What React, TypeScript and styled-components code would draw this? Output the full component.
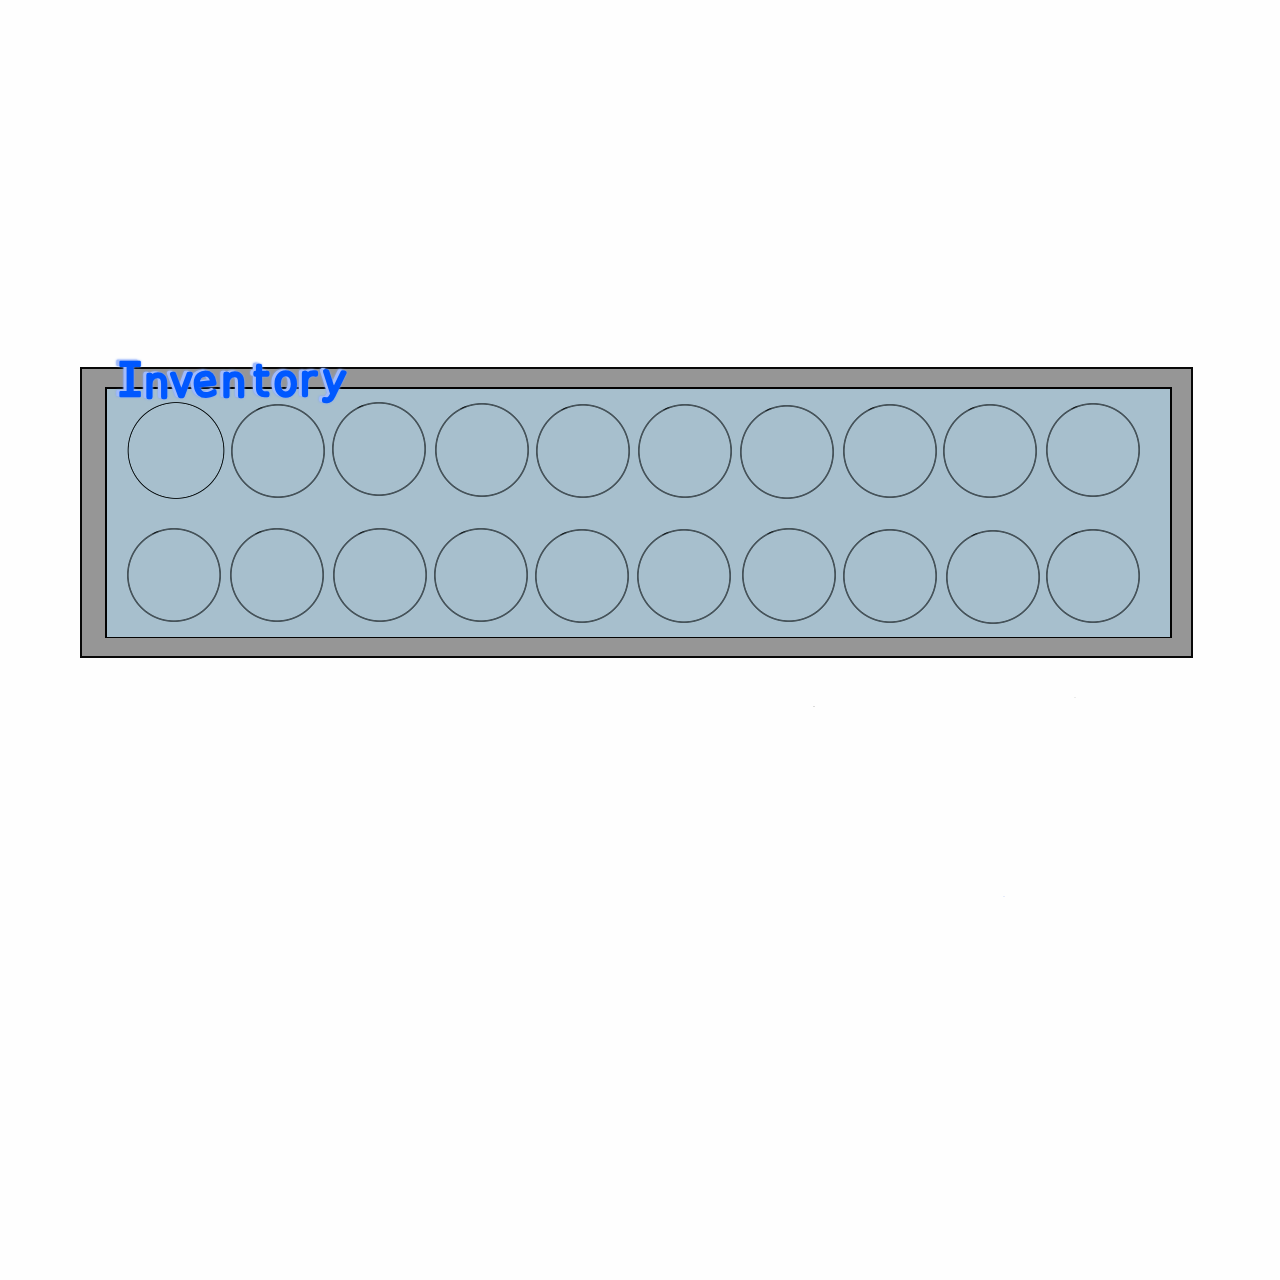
import React from "react";
import styled, { createGlobalStyle } from "styled-components";

const GlobalStyle = createGlobalStyle`
  *, *::before, *::after { box-sizing: border-box; }
  body { margin: 0; background: #fefefe; }
`;

const Page = styled.main`
  position: relative;
  width: 1280px;
  height: 1280px;
  padding: 367px 87px 0 80px;
  overflow: hidden;
`;

const Frame = styled.section`
  position: relative;
  height: 291px;
  padding: 18px 19px 18px 23px;
  border: 2px solid #080808;
  background: #969696;
`;

const Tray = styled.div`
  display: flex;
  flex-direction: column;
  gap: 27px;
  height: 251px;
  padding: 13px 0 0 20px;
  border: solid #030303;
  border-width: 2px 2px 1px 2px;
  background: #a7bfcd;
`;

const SlotRow = styled.div`
  display: flex;
  flex: none;
  align-items: flex-start;
  gap: 8px;
  height: 99px;
`;

const Slot = styled.div<{ $nudge: number; $drop: number }>`
  position: relative;
  flex: none;
  width: 94px;
  height: 94px;
  margin: ${(p) => p.$drop}px 0 0 ${(p) => p.$nudge}px;
  background: radial-gradient(
    circle at center,
    transparent 44.9px,
    #46535a 45.7px,
    #46535a 46.6px,
    transparent 47.4px
  );

  &::before {
    content: "";
    position: absolute;
    inset: 0;
    border: 1.5px solid #0a0f11;
    border-radius: 50%;
    mask: conic-gradient(from -29deg, transparent, #000 4deg 7deg, transparent 11deg);
  }
`;

const FirstSlot = styled.div`
  flex: none;
  width: 98px;
  height: 98px;
  background: radial-gradient(
    circle at 49px 48.5px,
    transparent 47px,
    #151d20 47.7px,
    #151d20 48px,
    transparent 48.8px
  );
`;

const Title = styled.svg`
  position: absolute;
  left: 28px;
  top: -17px;
  width: 250px;
  height: 60px;
  overflow: visible;
  filter: drop-shadow(-2.8px -0.5px 0.5px #a2bbfb) drop-shadow(0 0 1px #7fa5fb);
`;

const Lettering = styled.text`
  font-family: "DejaVu Sans", sans-serif;
  font-size: 40px;
  font-weight: 200;
  fill: #0058ff;
  stroke: #0058ff;
  stroke-width: 4.4px;
  stroke-linejoin: round;
  stroke-linecap: round;
`;

const Initial = styled.tspan`
  font-family: "DejaVu Sans Mono", monospace;
  font-size: 47px;
  font-weight: 400;
  stroke-width: 2.4px;
`;

const Speck = styled.i<{ $x: number; $y: number; $tint: string }>`
  position: absolute;
  left: ${(p) => p.$x}px;
  top: ${(p) => p.$y}px;
  width: 2px;
  height: 1px;
  background: ${(p) => p.$tint};
`;

type Ring = { nudge: number; drop: number };

const topRow: Ring[] = [
  { nudge: -2, drop: 2 },
  { nudge: -1, drop: 0 },
  { nudge: 1, drop: 1 },
  { nudge: -1, drop: 2 },
  { nudge: 0, drop: 2 },
  { nudge: 0, drop: 3 },
  { nudge: 1, drop: 2 },
  { nudge: -2, drop: 2 },
  { nudge: 1, drop: 1 },
];

const bottomRow: Ring[] = [
  { nudge: 0, drop: 0 },
  { nudge: 1, drop: 0 },
  { nudge: 1, drop: 0 },
  { nudge: -1, drop: 0 },
  { nudge: -1, drop: 1 },
  { nudge: 0, drop: 1 },
  { nudge: 3, drop: 0 },
  { nudge: -1, drop: 1 },
  { nudge: 1, drop: 2 },
  { nudge: -2, drop: 1 },
];

export default function App() {
  return (
    <>
      <GlobalStyle />
      <Page>
        <Frame>
          <Tray>
            <SlotRow>
              <FirstSlot />
              {topRow.map((ring, i) => (
                <Slot key={i} $nudge={ring.nudge} $drop={ring.drop} />
              ))}
            </SlotRow>
            <SlotRow>
              {bottomRow.map((ring, i) => (
                <Slot key={i} $nudge={ring.nudge} $drop={ring.drop} />
              ))}
            </SlotRow>
          </Tray>
          <Title viewBox="0 0 250 60" role="img" aria-label="Inventory">
            <Lettering
              x="6 34 59.5 84 111 143.5 163.5 189.5 211.5"
              y="44 45 43.5 44.5 44 42.5 42.5 42.5 41"
              rotate="0 0 0 -6 0 0 0 0 4"
            >
              <Initial>I</Initial>nventory
            </Lettering>
          </Title>
        </Frame>
        <Speck $x={813} $y={706} $tint="#dcdcdc" />
        <Speck $x={1074} $y={697} $tint="#ececec" />
        <Speck $x={1003} $y={896} $tint="#e6ecfb" />
      </Page>
    </>
  );
}
